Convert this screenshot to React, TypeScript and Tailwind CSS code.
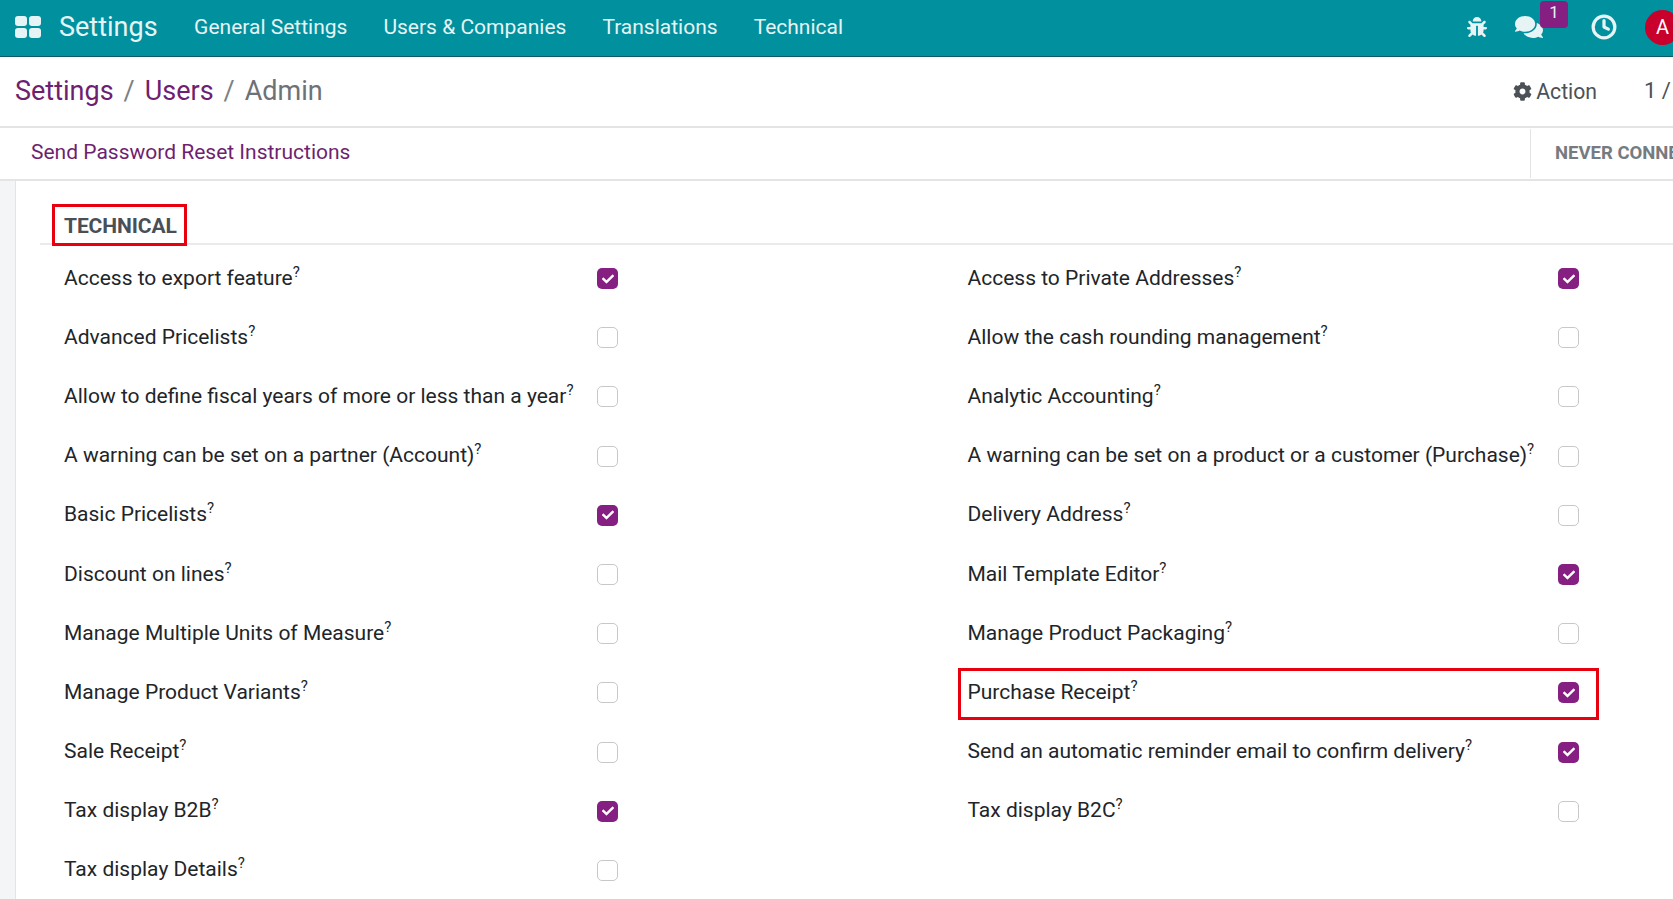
import React from "react";
import { FaBug, FaComments, FaCog, FaCheck } from "react-icons/fa";
import { FiClock } from "react-icons/fi";

const left: [string, boolean][] = [
  ["Access to export feature", true],
  ["Advanced Pricelists", false],
  ["Allow to define fiscal years of more or less than a year", false],
  ["A warning can be set on a partner (Account)", false],
  ["Basic Pricelists", true],
  ["Discount on lines", false],
  ["Manage Multiple Units of Measure", false],
  ["Manage Product Variants", false],
  ["Sale Receipt", false],
  ["Tax display B2B", true],
  ["Tax display Details", false],
];
const right: [string, boolean][] = [
  ["Access to Private Addresses", true],
  ["Allow the cash rounding management", false],
  ["Analytic Accounting", false],
  ["A warning can be set on a product or a customer (Purchase)", false],
  ["Delivery Address", false],
  ["Mail Template Editor", true],
  ["Manage Product Packaging", false],
  ["Purchase Receipt", true],
  ["Send an automatic reminder email to confirm delivery", true],
  ["Tax display B2C", false],
];

function Row({ label, checked }: { label: string; checked: boolean }) {
  return (
    <div className="flex h-[59.2px] items-center justify-between">
      <span className="relative -top-[0.5px] whitespace-nowrap text-[21px] leading-none text-[#212529]">
        {label}
        <sup className="relative -top-[8px] align-baseline text-[15px] leading-none">?</sup>
      </span>
      {checked ? (
        <span className="flex h-[21px] w-[21px] items-center justify-center rounded-[5px] bg-[#851f81] text-white">
          <FaCheck className="h-[12px] w-[12px]" />
        </span>
      ) : (
        <span className="h-[21px] w-[21px] rounded-[5px] border-[1.5px] border-[#c6c8ca] bg-white" />
      )}
    </div>
  );
}

export default function App() {
  return (
    <div className="h-[899px] w-full overflow-hidden bg-white font-['Roboto',sans-serif]">
      <div className="relative h-full w-[1680px]">
        <header className="flex h-[57px] items-center border-b border-[#0b5c63] bg-[#01909e] pb-[2px] text-[#e6f4f5]">
          <div className="ml-[15px] grid grid-cols-2 gap-x-[2px] gap-y-[2px]">
            <span className="h-[10px] w-[12px] rounded-[3px] bg-[#e6f4f5]" />
            <span className="h-[10px] w-[12px] rounded-[3px] bg-[#e6f4f5]" />
            <span className="h-[10px] w-[12px] rounded-[3px] bg-[#e6f4f5]" />
            <span className="h-[10px] w-[12px] rounded-[3px] bg-[#e6f4f5]" />
          </div>
          <span className="ml-[18px] text-[27px] leading-none">Settings</span>
          <nav className="ml-[36.5px] flex gap-[36px] text-[21px] leading-none">
            <span>General Settings</span>
            <span>Users &amp; Companies</span>
            <span>Translations</span>
            <span>Technical</span>
          </nav>
          <div className="ml-auto flex items-center">
            <FaBug className="h-[20px] w-[20px]" />
            <div className="relative ml-[28px] mr-[48px]">
              <FaComments className="h-[28px] w-[28px]" />
              <span className="absolute -top-[12px] left-[25px] flex h-[27px] w-[28px] items-center justify-center rounded-[4px] bg-[#851f81] pb-[5px] text-[17px] leading-none text-[#e6f4f5]">
                1
              </span>
            </div>
            <FiClock className="h-[26px] w-[26px]" strokeWidth={3} />
            <span className="ml-[28px] flex h-[35px] w-[35px] items-center justify-center rounded-full bg-[#c9002c] text-[20px] text-white">
              A
            </span>
          </div>
        </header>

        <div className="flex h-[70.5px] items-center border-b-2 border-[#e3e4e6]">
          <div className="ml-[15px] flex items-center gap-[10px] text-[27px] leading-none">
            <span className="text-[#6f1f70]">Settings</span>
            <span className="text-[#7b8085]">/</span>
            <span className="text-[#6f1f70]">Users</span>
            <span className="text-[#7b8085]">/</span>
            <span className="text-[#6c7278]">Admin</span>
          </div>
          <div className="ml-auto flex items-center text-[#4c5158]">
            <FaCog className="h-[19px] w-[19px]" />
            <span className="ml-[4px] text-[21.2px] leading-none">Action</span>
            <span className="ml-[47px] mr-[2px] w-[34px] whitespace-nowrap text-[22px] leading-none">1 /</span>
          </div>
        </div>

        <div className="flex h-[53px] items-center border-b-2 border-[#e3e4e6]">
          <span className="ml-[31px] pb-[2px] text-[21px] leading-none text-[#6f1f70]">Send Password Reset Instructions</span>
          <div className="ml-auto flex h-[49px] w-[150px] items-center overflow-hidden border-l border-[#e3e4e6] pl-[24px]">
            <span className="whitespace-nowrap text-[18.5px] font-bold leading-none text-[#777b80]">NEVER CONNECTED</span>
          </div>
        </div>

        <div className="flex h-[719px]">
          <div className="w-[16px] border-r border-[#e3e4e6] bg-[#f4f5f7]" />
          <main className="flex-1">
            <div className="ml-[24px] flex h-[64.5px] items-end border-b-2 border-[#e9eaec] pb-[3px] pl-[24px]">
              <h2 className="text-[21px] font-bold leading-[28px] tracking-[-0.1px] text-[#4a4f57]">TECHNICAL</h2>
            </div>
            <div className="ml-[48px] mt-[4px] flex gap-[349.5px]">
              <div className="w-[554px]">
                {left.map(([l, c]) => (
                  <Row key={l} label={l} checked={c} />
                ))}
              </div>
              <div className="w-[611.5px]">
                {right.map(([l, c]) => (
                  <Row key={l} label={l} checked={c} />
                ))}
              </div>
            </div>
          </main>
        </div>

        <div className="absolute left-[52px] top-[204px] h-[42px] w-[135px] border-[3px] border-[#e8000f]" />
        <div className="absolute left-[958px] top-[668px] h-[52px] w-[641px] border-[3px] border-[#e8000f]" />
      </div>
    </div>
  );
}
